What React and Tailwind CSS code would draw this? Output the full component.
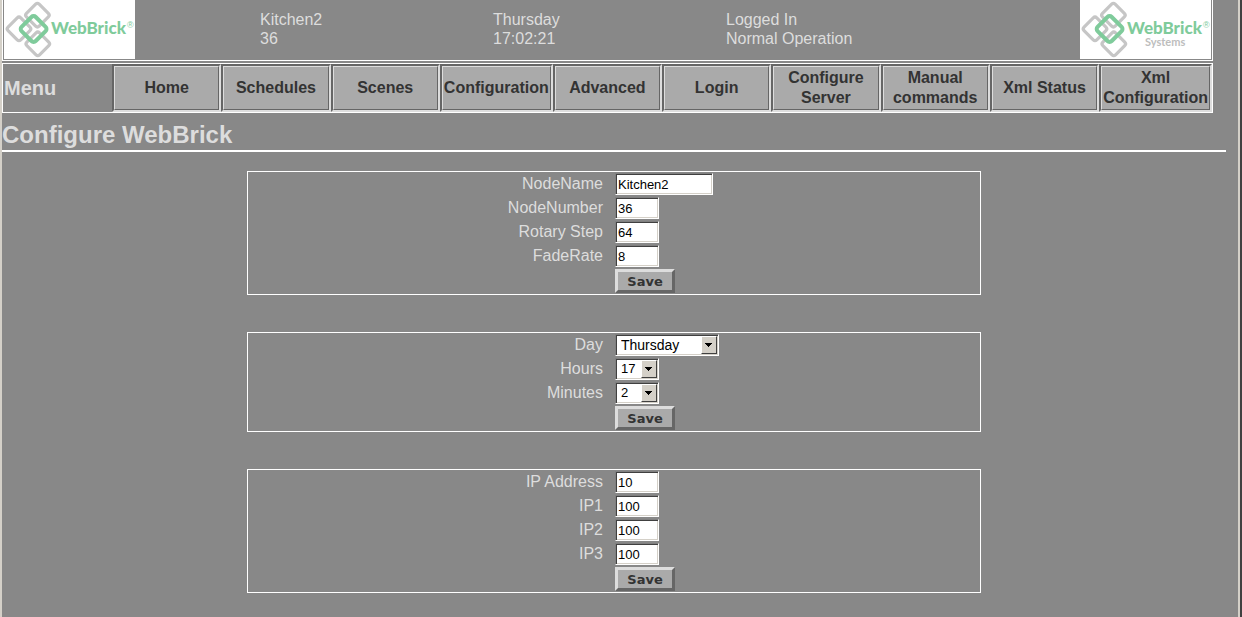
const NAV = [
  "Home",
  "Schedules",
  "Scenes",
  "Configuration",
  "Advanced",
  "Login",
  "Configure Server",
  "Manual commands",
  "Xml Status",
  "Xml Configuration",
];

const DAYS = ["Sunday", "Monday", "Tuesday", "Wednesday", "Thursday", "Friday", "Saturday"];
const HOURS = Array.from({ length: 24 }, (_, i) => String(i));
const MINUTES = Array.from({ length: 60 }, (_, i) => String(i));

function Logo({ systems }) {
  return (
    <svg
      width="131"
      height="59"
      viewBox="0 0 131 59"
      role="img"
      aria-label={systems ? "WebBrick Systems" : "WebBrick"}
      className="block shrink-0 bg-white"
    >
      <g fill="none" stroke="#c6c6c6" strokeWidth="3.2">
        <rect x="-9" y="-9" width="18" height="18" rx="2.5" transform="translate(33.4 15.2) rotate(45)" />
        <rect x="-9" y="-9" width="18" height="18" rx="2.5" transform="translate(15 28.8) rotate(45)" />
        <rect x="-9" y="-9" width="18" height="18" rx="2.5" transform="translate(33.8 43.8) rotate(45)" />
        <rect
          x="-10"
          y="-10"
          width="20"
          height="20"
          rx="3"
          stroke="#7fcb9b"
          strokeWidth="4"
          transform="translate(29.6 29) rotate(45)"
        />
      </g>
      <text x="47" y="34" fill="#7fcb9b" fontSize="17" fontWeight="900" fontFamily="Lato, sans-serif">
        WebBrick
      </text>
      <text x="123" y="28" fill="#7fcb9b" fontSize="9" fontFamily="'Liberation Sans', sans-serif">
        ®
      </text>
      {systems && (
        <text x="65" y="46" fill="#bdbdbd" fontSize="11" fontWeight="700" fontFamily="Lato, sans-serif">
          Systems
        </text>
      )}
    </svg>
  );
}

function Row({ label, id, children }) {
  return (
    <div className="grid h-6 grid-cols-2 items-center">
      <label htmlFor={id} className="pr-[11px] text-right leading-6">
        {label}
      </label>
      <div className="flex pl-px">{children}</div>
    </div>
  );
}

const SUNKEN =
  "h-[22px] border border-t-[#808080] border-l-[#808080] border-r-white border-b-white bg-white text-black shadow-[inset_1px_1px_0_#404040,inset_-1px_-1px_0_#d4d0c8]";

function TextRow({ label, id, value, wide }) {
  return (
    <Row label={label} id={id}>
      <input
        id={id}
        type="text"
        defaultValue={value}
        className={`${SUNKEN} rounded-none px-0.5 text-[13px] outline-none ${wide ? "w-[98px]" : "w-11"}`}
      />
    </Row>
  );
}

function SelectRow({ label, id, value, options, wide }) {
  return (
    <Row label={label} id={id}>
      <div className={`${SUNKEN} grid p-px ${wide ? "w-[104px]" : "w-11"}`}>
        <select
          id={id}
          defaultValue={value}
          className={`col-start-1 row-start-1 w-full appearance-none pl-1 leading-[18px] outline-none ${wide ? "text-sm" : "text-[13px]"}`}
        >
          {options.map((o) => (
            <option key={o}>{o}</option>
          ))}
        </select>
        <span className="pointer-events-none col-start-1 row-start-1 flex w-4 items-center justify-center justify-self-end border border-t-white border-l-white border-r-[#404040] border-b-[#404040] bg-[#d4d0c8]">
          <svg width="7" height="4" viewBox="0 0 7 4" shapeRendering="crispEdges" aria-hidden="true">
            <path d="M0 0H7V1H6V2H5V3H4V4H3V3H2V2H1V1H0Z" fill="#000" />
          </svg>
        </span>
      </div>
    </Row>
  );
}

function Panel({ name, children }) {
  return (
    <form
      aria-label={name}
      onSubmit={(e) => e.preventDefault()}
      className="mx-auto w-3/5 border border-white"
    >
      {children}
      <div className="grid h-[26px] grid-cols-2 items-center">
        <div className="col-start-2 flex pl-px">
          <button
            type="submit"
            className="h-6 w-[60px] border-3 border-t-[#dddddd] border-l-[#dddddd] border-r-[#666666] border-b-[#666666] bg-[#aaaaaa] pt-px font-['DejaVu_Sans',sans-serif] text-[13px] leading-[17px] font-bold text-[#333333]"
          >
            Save
          </button>
        </div>
      </div>
    </form>
  );
}

export default function App() {
  return (
    <div className="flex min-h-screen border-l-2 border-[#d4d0c8] bg-[#888888] font-['Liberation_Sans',Arial,sans-serif] text-base text-[#dddddd]">
      <div className="min-w-0 flex-1 pr-3">
        <header className="mr-[13px] flex h-[61px] justify-between border-x border-b border-white px-px">
          <Logo />
          <div className="grid flex-1 grid-cols-[233px_233px_1fr] pt-[10px] pl-[125px] leading-[19px]">
            <div>
              <p>Kitchen2</p>
              <p>36</p>
            </div>
            <div>
              <p>Thursday</p>
              <p>17:02:21</p>
            </div>
            <div>
              <p>Logged In</p>
              <p>Normal Operation</p>
            </div>
          </div>
          <Logo systems />
        </header>

        <nav className="mt-0.5 mr-[13px] flex h-[50px] border border-white">
          <div className="flex w-[109px] shrink-0 items-center pl-px text-xl leading-6 font-bold">Menu</div>
          <ul className="flex flex-1">
            {NAV.map((item) => (
              <li
                key={item}
                className="flex flex-1 border-2 border-t-[#666666] border-r-[#dddddd] border-b-[#dddddd] border-l-[#666666]"
              >
                <a
                  href="#"
                  className="flex flex-1 items-center justify-center border border-t-[#dddddd] border-l-[#dddddd] border-r-[#666666] border-b-[#666666] bg-[#aaaaaa] px-px text-center leading-5 font-bold text-[#333333]"
                >
                  {item}
                </a>
              </li>
            ))}
          </ul>
        </nav>

        <h1 className="mt-2 text-2xl leading-7 font-bold">Configure WebBrick</h1>
        <hr className="mt-px border-t-2 border-white" />

        <main className="mt-[19px] flex flex-col gap-[37px]">
          <Panel name="Node">
            <TextRow label="NodeName" id="node-name" value="Kitchen2" wide />
            <TextRow label="NodeNumber" id="node-number" value="36" />
            <TextRow label="Rotary Step" id="rotary-step" value="64" />
            <TextRow label="FadeRate" id="fade-rate" value="8" />
          </Panel>
          <Panel name="Time">
            <SelectRow label="Day" id="day" value="Thursday" options={DAYS} wide />
            <SelectRow label="Hours" id="hours" value="17" options={HOURS} />
            <SelectRow label="Minutes" id="minutes" value="2" options={MINUTES} />
          </Panel>
          <Panel name="Network">
            <TextRow label="IP Address" id="ip-0" value="10" />
            <TextRow label="IP1" id="ip-1" value="100" />
            <TextRow label="IP2" id="ip-2" value="100" />
            <TextRow label="IP3" id="ip-3" value="100" />
          </Panel>
        </main>
      </div>
      <div className="w-1 border-l-2 border-[#d4d0c8] bg-[#404040]" />
    </div>
  );
}
